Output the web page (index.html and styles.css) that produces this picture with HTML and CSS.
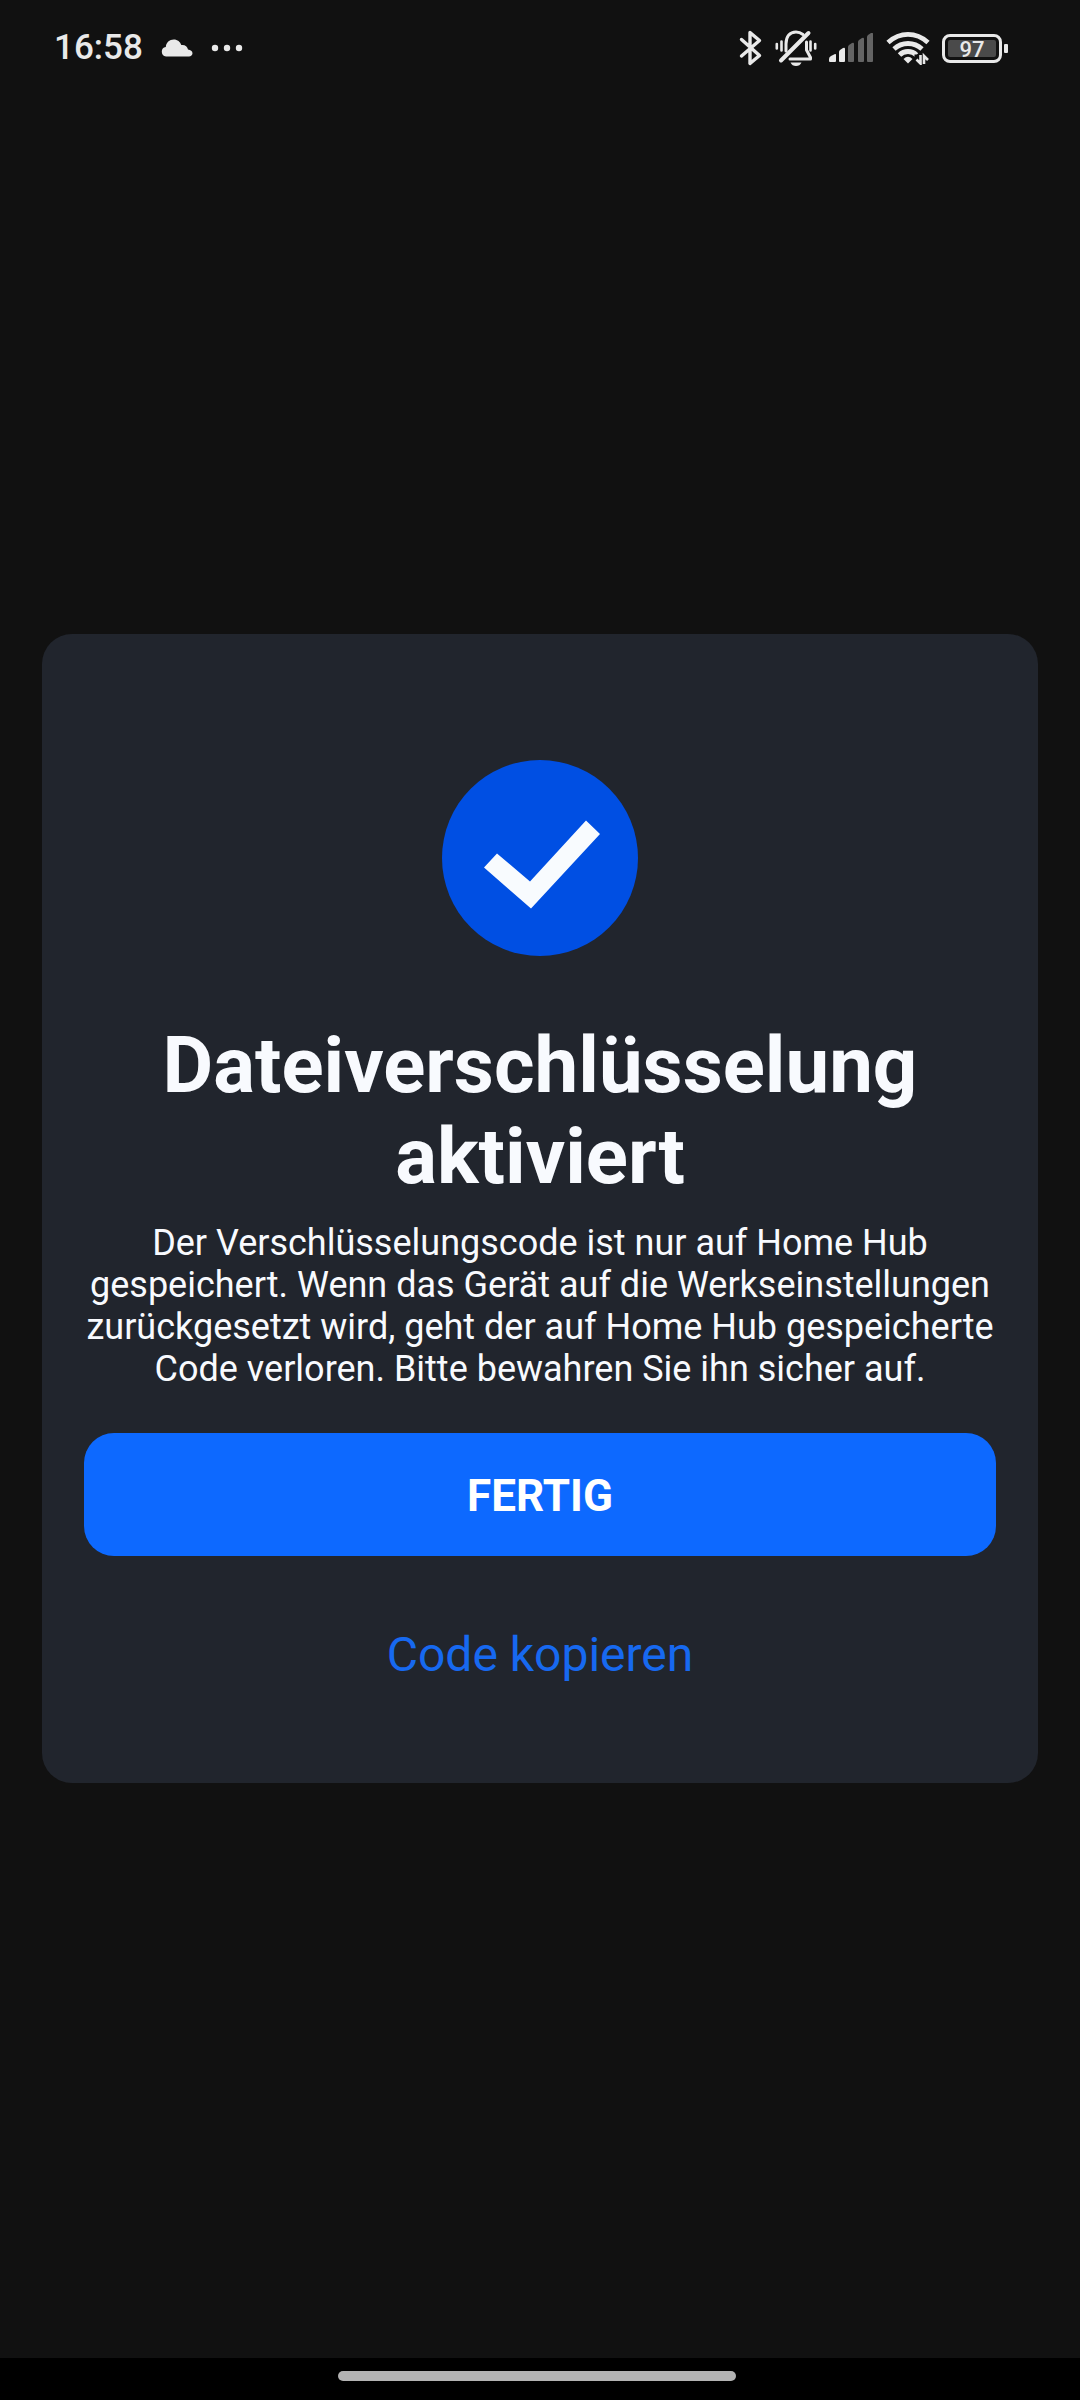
FILE: index.html
```html
<!DOCTYPE html>
<html lang="de">
<head>
<meta charset="utf-8">
<meta name="viewport" content="width=device-width, initial-scale=1">
<title>Dateiverschlüsselung</title>
<link rel="stylesheet" href="styles.css">
</head>
<body>
<header class="status">
  <div class="status-group">
    <time class="clock">16:58</time>
    <svg class="icon" width="32" height="18" viewBox="0 0 32 18" aria-hidden="true"><path fill="currentColor" d="M5 17.500A4.800 4.800 0 0 1 4.800 8C5 3.500 8.500.500 12.800.500c3.700 0 6.500 2.300 7.500 5.600 3.500-.6 6.200 1.600 6.700 4.400 2.500.300 4.500 1.700 4.500 3.800 0 2-1.600 3.200-3.500 3.200z"/></svg>
    <svg class="icon" width="32" height="8" viewBox="0 0 32 8" aria-hidden="true"><g fill="currentColor"><circle cx="4" cy="4" r="3.200"/><circle cx="16" cy="4" r="3.200"/><circle cx="28" cy="4" r="3.200"/></g></svg>
  </div>
  <div class="status-group status-right">
    <svg class="icon" width="24" height="36" viewBox="0 0 24 36" aria-label="Bluetooth"><path fill="none" stroke="currentColor" stroke-width="3.400" stroke-linejoin="round" stroke-linecap="round" d="M2.500 9.500 20.500 25.500 11 33.500V2.500l9.500 8L2.500 26"/></svg>
    <svg class="icon" width="42" height="38" viewBox="0 0 42 38" aria-label="Stumm">
      <g fill="none" stroke="currentColor" stroke-linecap="round" stroke-width="3">
        <path d="M11 22V15C11 7 15 3 21 3c3 0 5 1 7 2.500M31.500 13v8l4 7.500v1.500H15" stroke-linejoin="round"/>
        <path d="M33.500 4 6 31.500" stroke-width="4"/>
        <path d="M6.500 12.500v9M35.500 12.500v9" stroke-width="2.600"/>
        <path d="M1.800 15v4.500M40.200 15v4.500" stroke-width="2.600"/>
      </g>
      <path fill="currentColor" d="M15.500 33.500h11c-1 2.500-3 3.500-5.500 3.500s-4.500-1-5.500-3.500z"/>
    </svg>
    <svg class="icon" width="45" height="30" viewBox="0 0 45 30" aria-label="Mobilfunk">
      <g fill="currentColor"><path d="M0 28v-2q0-2 2-3l4-2q1-.4 1 1v6q0 1-1 1H1q-1 0-1-1z"/><path d="M10 28V19q0-1 1-2l3-2q2-1 2 1v12q0 1-1 1h-4q-1 0-1-1z"/></g>
      <g fill="#646464"><path d="M19 28V14q0-1 1-2l3-2q2-1 2 1v17q0 1-1 1h-4q-1 0-1-1z"/><path d="M29 28V9q0-1 1-2l3-2q2-1 2 1v22q0 1-1 1h-4q-1 0-1-1z"/><path d="M38 28V4q0-1 1-2l3-2q2-1 2 1v27q0 1-1 1h-4q-1 0-1-1z"/></g>
    </svg>
    <svg class="icon" width="44" height="34" viewBox="0 0 44 34" aria-label="WLAN">
      <g fill="none" stroke="currentColor" stroke-width="4.800"><path d="M2 11.500Q11 3.400 22 3.400T42 11.500"/><path d="M8 18Q14 12.500 22 12.500t14 5.500"/><path d="M13.500 24Q17 20.500 22 20.500t8.500 3.500"/></g>
      <path fill="currentColor" d="M17.500 28q4.500-4.500 9 0L22 32.500z"/>
      <path fill="#111" d="M28.500 23.500H44V34H28.500z"/>
      <path fill="none" stroke="currentColor" stroke-width="2.600" d="M34.500 24v8.500l-4-4M38 33v-8l4 4"/>
    </svg>
    <div class="battery"><span class="battery-box"><span class="battery-level">97</span></span><span class="battery-tip"></span></div>
  </div>
</header>
<main class="stage">
  <section class="card">
    <svg class="badge" width="196" height="196" viewBox="0 0 196 196" aria-hidden="true"><circle cx="98" cy="98" r="98" fill="#004fe3"/><path fill="#f8fbfe" d="M42 107.500 55 93.500 88 121.500 144 60.500 158 74 89 148.500z"/></svg>
    <h1 class="title">Dateiverschlüsselung aktiviert</h1>
    <p class="text">Der Verschlüsselungscode ist nur auf Home Hub gespeichert. Wenn das Gerät auf die Werkseinstellungen zurückgesetzt wird, geht der auf Home Hub gespeicherte Code verloren. Bitte bewahren Sie ihn sicher auf.</p>
    <button class="button button-primary" type="button">FERTIG</button>
    <button class="button button-plain" type="button">Code kopieren</button>
  </section>
</main>
<footer class="navbar"><div class="handle"></div></footer>
</body>
</html>
```
FILE: styles.css
```css
* {
  box-sizing: border-box;
}

body {
  margin: 0;
  min-height: 100vh;
  display: flex;
  flex-direction: column;
  background: #111;
  color: #f8fafe;
  font-family: Roboto, "Liberation Sans", sans-serif;
}

.status {
  display: flex;
  justify-content: space-between;
  height: 96px;
  padding: 0 72px 0 54px;
  color: #e9e9e9;
}

.status-group {
  display: flex;
  align-items: center;
  gap: 18px;
  height: 96px;
}

.status-right {
  gap: 12px;
}

.icon {
  display: block;
}

.clock {
  font-size: 35px;
  font-weight: 500;
  line-height: 40px;
}

.battery {
  display: flex;
  align-items: center;
  gap: 2px;
}

.battery-box {
  width: 60px;
  height: 29px;
  padding: 3px;
  border: 3px solid currentColor;
  border-radius: 8px;
}

.battery-level {
  display: block;
  height: 17px;
  border-radius: 2px;
  background: #4a4a4a;
  font-size: 22px;
  font-weight: 500;
  line-height: 19px;
  text-align: center;
}

.battery-tip {
  width: 4px;
  height: 9px;
  border-radius: 1px;
  background: currentColor;
}

.stage {
  flex: 1;
  display: flex;
  align-items: center;
  padding: 0 42px 38px;
}

.card {
  flex: 1;
  display: flex;
  flex-direction: column;
  align-items: center;
  padding: 126px 42px 67px;
  border-radius: 30px;
  background: #21252d;
  text-align: center;
}

.title {
  margin: 64px 0 20px;
  font-size: 78px;
  font-weight: 700;
  line-height: 91px;
}

.text {
  margin: 0 0 43px;
  font-size: 36px;
  line-height: 42px;
}

.button {
  width: 100%;
  height: 123px;
  padding: 0;
  border: 0;
  border-radius: 30px;
  background: none;
  font-family: inherit;
  cursor: pointer;
}

.button-primary {
  margin-bottom: 37px;
  padding-top: 4px;
  background: #0d69ff;
  color: #fff;
  font-size: 44px;
  font-weight: 700;
}

.button-plain {
  color: #1769f0;
  font-size: 48px;
}

.navbar {
  display: flex;
  justify-content: center;
  height: 42px;
  padding: 13px 6px 0 0;
  background: #000;
}

.handle {
  width: 37%;
  height: 10px;
  border-radius: 5px;
  background: #b3b3b3;
}
```
